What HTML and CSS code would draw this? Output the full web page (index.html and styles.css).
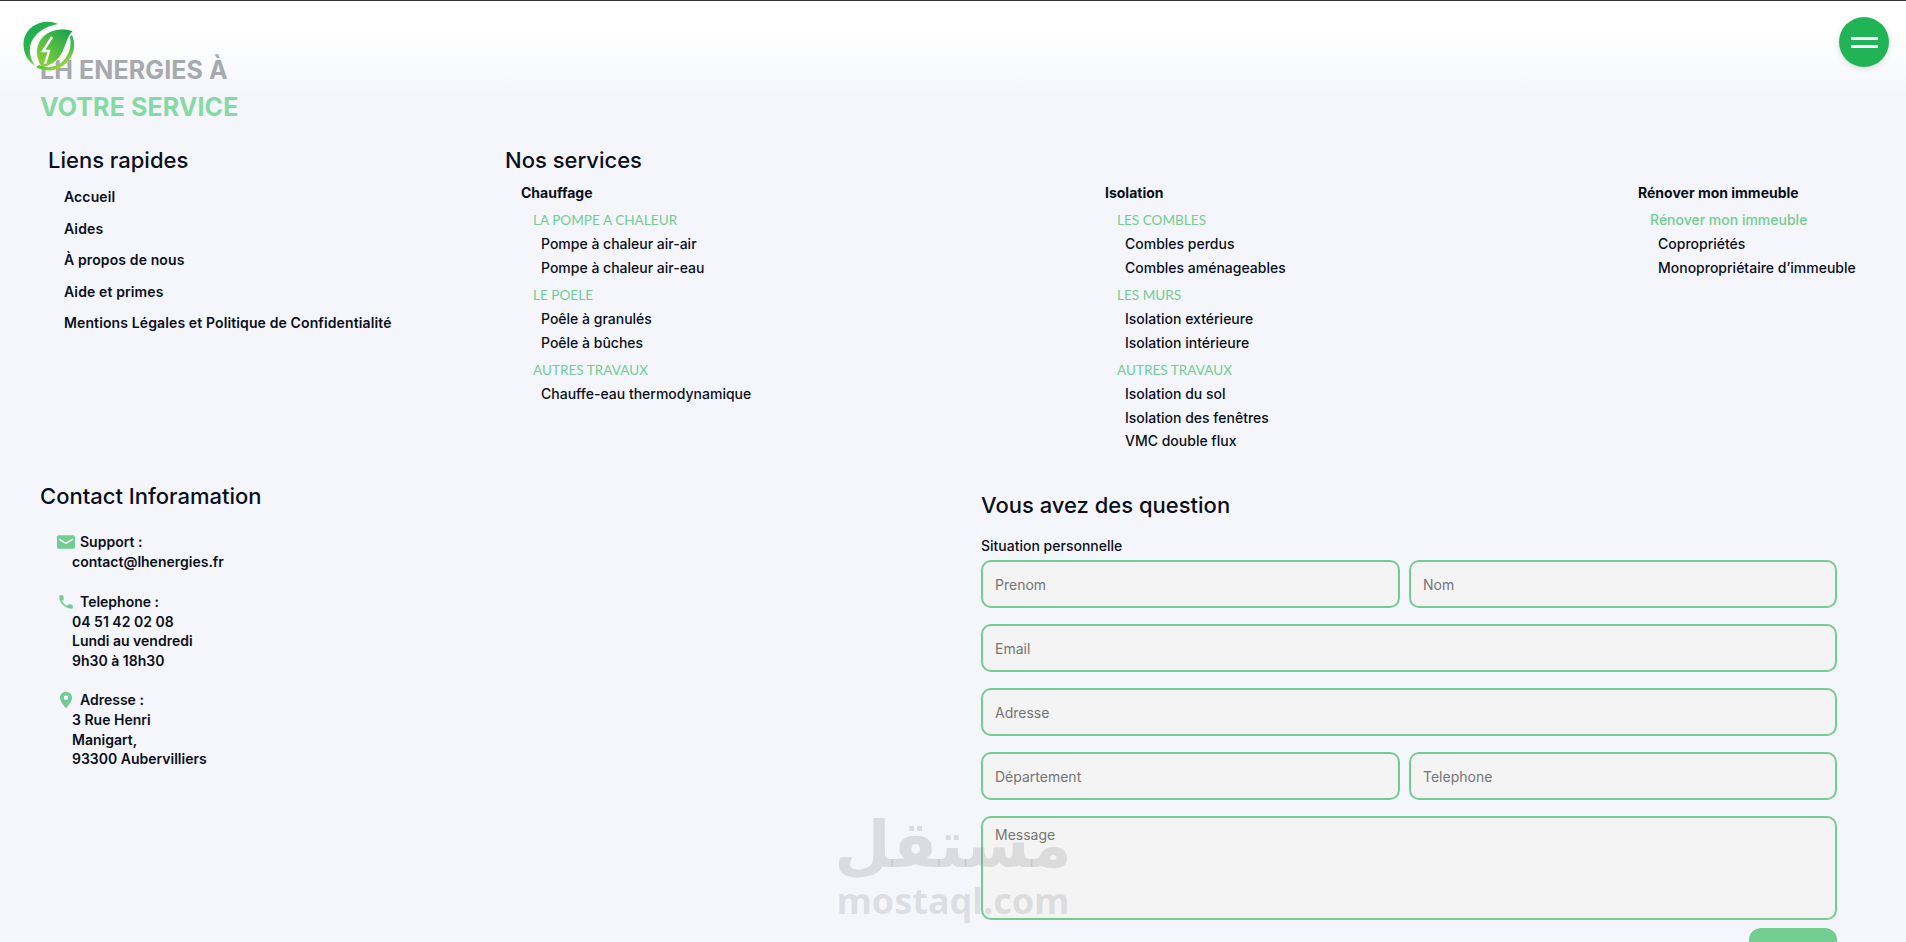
FILE: index.html
```html
<!DOCTYPE html>
<html lang="fr">
  <head>
    <meta charset="UTF-8" />
    <meta name="viewport" content="width=device-width, initial-scale=1.0" />
    <title>LH Energies</title>
    <link rel="stylesheet" href="styles.css">
  </head>
  <body>
    <header class="page-header">
      <svg class="logo" width="54" height="54" viewBox="0 0 54 54">
        <defs>
          <linearGradient id="logoRing" x1="0" y1="0" x2="0.6" y2="1">
            <stop offset="0" stop-color="#12a650" />
            <stop offset="0.55" stop-color="#2db84a" />
            <stop offset="1" stop-color="#a4dc2c" />
          </linearGradient>
          <linearGradient id="logoLeaf" x1="0.9" y1="0" x2="0.1" y2="1">
            <stop offset="0" stop-color="#13a24f" />
            <stop offset="1" stop-color="#93d534" />
          </linearGradient>
        </defs>
        <path d="M36 4 C22 -2 6 5 2 19 C0 30 4 40 13 46 C7 37 6 27 11 19 C16 11 25 6 36 4 Z" fill="url(#logoRing)" />
        <path d="M51 11 C38 6 24 11 18 20 C13 28 13 38 20 48 C27 46 35 42 39 35 C44 27 45 17 51 11 Z" fill="url(#logoLeaf)" stroke="#fff" stroke-width="0.8" />
        <path d="M50 15 C55 27 51 38 42 45 C33 52 22 52 14 47 L17 45 C25 49 34 47 40 42 C47 36 50 26 48 17 Z" fill="url(#logoRing)" />
        <path d="M30 17 L21 31 L27 31 L23 44" fill="none" stroke="#fff" stroke-width="2.4" />
      </svg>
      <h1 class="hero-title">
        <span class="hero-dark">LH ENERGIES À</span>
        <span class="hero-green">VOTRE SERVICE</span>
      </h1>
      <button class="menu-btn" aria-label="Menu"><span></span><span></span></button>
    </header>

    <section class="links-row">
      <div class="quick-links">
        <h2 class="section-title">Liens rapides</h2>
        <ul class="quick-list">
          <li>Accueil</li>
          <li>Aides</li>
          <li>À propos de nous</li>
          <li>Aide et primes</li>
          <li>Mentions Légales et Politique de Confidentialité</li>
        </ul>
      </div>
      <div class="services">
        <h2 class="section-title">Nos services</h2>
        <div class="service-cols">
          <div class="service-col">
            <h3 class="col-title">Chauffage</h3>
            <h4 class="group-title">LA POMPE A CHALEUR</h4>
            <ul class="group-list">
              <li>Pompe à chaleur air-air</li>
              <li>Pompe à chaleur air-eau</li>
            </ul>
            <h4 class="group-title">LE POELE</h4>
            <ul class="group-list">
              <li>Poêle à granulés</li>
              <li>Poêle à bûches</li>
            </ul>
            <h4 class="group-title">AUTRES TRAVAUX</h4>
            <ul class="group-list">
              <li>Chauffe-eau thermodynamique</li>
            </ul>
          </div>
          <div class="service-col">
            <h3 class="col-title">Isolation</h3>
            <h4 class="group-title">LES COMBLES</h4>
            <ul class="group-list">
              <li>Combles perdus</li>
              <li>Combles aménageables</li>
            </ul>
            <h4 class="group-title">LES MURS</h4>
            <ul class="group-list">
              <li>Isolation extérieure</li>
              <li>Isolation intérieure</li>
            </ul>
            <h4 class="group-title">AUTRES TRAVAUX</h4>
            <ul class="group-list">
              <li>Isolation du sol</li>
              <li>Isolation des fenêtres</li>
              <li>VMC double flux</li>
            </ul>
          </div>
          <div class="service-col">
            <h3 class="col-title">Rénover mon immeuble</h3>
            <h4 class="group-title group-title-plain">Rénover mon immeuble</h4>
            <ul class="group-list">
              <li>Copropriétés</li>
              <li>Monopropriétaire d’immeuble</li>
            </ul>
          </div>
        </div>
      </div>
    </section>

    <section class="contact-row">
      <div class="contact-info">
        <h2 class="section-title">Contact Inforamation</h2>
        <div class="contact-block">
          <p class="contact-head">
            <svg class="contact-icon" width="18" height="18" viewBox="0 0 24 24"><path d="M2.5 3h19A2.5 2.5 0 0 1 24 5.5v13a2.5 2.5 0 0 1-2.5 2.5h-19A2.5 2.5 0 0 1 0 18.500v-13A2.500 2.500 0 0 1 2.500 3zm9.500 9.500L3 7v2.500l9 5.500 9-5.500V7z" /></svg>
            Support :
          </p>
          <p class="contact-line">contact@lhenergies.fr</p>
        </div>
        <div class="contact-block">
          <p class="contact-head">
            <svg class="contact-icon" width="18" height="18" viewBox="0 0 24 24"><path d="M6.600 10.800c1.400 2.800 3.800 5.100 6.600 6.600l2.200-2.200c.3-.3.700-.4 1-.2 1.100.4 2.300.6 3.600.6.600 0 1 .4 1 1V20c0 .6-.4 1-1 1C10.600 21 3 13.400 3 4c0-.6.400-1 1-1h3.500c.6 0 1 .4 1 1 0 1.300.2 2.500.6 3.600.1.300 0 .7-.2 1z" /></svg>
            Telephone :
          </p>
          <p class="contact-line">04 51 42 02 08</p>
          <p class="contact-line">Lundi au vendredi</p>
          <p class="contact-line">9h30 à 18h30</p>
        </div>
        <div class="contact-block">
          <p class="contact-head">
            <svg class="contact-icon" width="18" height="18" viewBox="0 0 24 24"><path d="M12 1C7.100 1 4 4.700 4 9c0 5.500 8 14 8 14s8-8.500 8-14c0-4.300-3.100-8-8-8zm0 11a3 3 0 1 1 0-6 3 3 0 0 1 0 6z" /></svg>
            Adresse :
          </p>
          <p class="contact-line">3 Rue Henri</p>
          <p class="contact-line">Manigart,</p>
          <p class="contact-line">93300 Aubervilliers</p>
        </div>
      </div>

      <form class="contact-form">
        <h2 class="section-title">Vous avez des question</h2>
        <label class="form-label">Situation personnelle</label>
        <div class="form-row">
          <input class="field" type="text" placeholder="Prenom" />
          <input class="field" type="text" placeholder="Nom" />
        </div>
        <input class="field" type="text" placeholder="Email" />
        <input class="field" type="text" placeholder="Adresse" />
        <div class="form-row">
          <input class="field" type="text" placeholder="Département" />
          <input class="field" type="text" placeholder="Telephone" />
        </div>
        <textarea class="field field-area" placeholder="Message"></textarea>
        <button class="send-btn" type="button"></button>
      </form>
    </section>

    <div class="watermark">
      <span class="watermark-ar" dir="rtl">مستقل</span>
      <span class="watermark-en">mostaql.com</span>
    </div>
  </body>
</html>
```

FILE: styles.css
```css
html,
body {
  height: 100%;
}
body {
  position: relative;
  box-sizing: border-box;
  height: 942px;
  overflow: hidden;
  margin: 0;
  border-top: 1px solid #333;
  background: linear-gradient(#fff 0, #fff 30px, #f4f6fc 100px);
  font-family: Inter, "Liberation Sans", sans-serif;
  color: #0b0f19;
}
ul {
  list-style: none;
  margin: 0;
  padding: 0;
}
p,
h1,
h2,
h3,
h4 {
  margin: 0;
}

.page-header {
  display: flex;
  justify-content: space-between;
  align-items: flex-start;
  height: 146px;
  padding: 0 17px 0 40px;
}
.logo {
  position: absolute;
  left: 22px;
  top: 19px;
}
.hero-title {
  display: flex;
  flex-direction: column;
  gap: 9px;
  margin-top: 55px;
  font-size: 25px;
  line-height: 28px;
  font-weight: 700;
  letter-spacing: 0.1px;
}
.hero-dark {
  color: #a6a9ae;
}
.hero-green {
  color: #85d9a3;
}
.menu-btn {
  display: flex;
  flex-direction: column;
  justify-content: center;
  gap: 5px;
  align-items: center;
  width: 50px;
  height: 50px;
  margin-top: 16px;
  padding: 0;
  border: none;
  border-radius: 50%;
  background-color: #21b457;
  box-shadow: 0 2px 6px rgba(0, 0, 0, 0.12);
}
.menu-btn span {
  display: block;
  width: 27px;
  height: 3px;
  background-color: #fff;
}

.section-title {
  font-size: 22px;
  line-height: 26px;
  font-weight: 500;
}

.links-row {
  display: flex;
  height: 317px;
  padding-left: 48px;
}
.quick-links {
  width: 457px;
}
.quick-list {
  padding: 8px 0 0 16px;
}
.quick-list li {
  height: 31.5px;
  line-height: 31.5px;
  font-size: 14px;
  font-weight: 600;
  letter-spacing: 0.12px;
}
.services {
  flex-grow: 1;
}
.service-cols {
  display: grid;
  grid-template-columns: 584px 533px auto;
  padding: 10px 0 0 16px;
}
.col-title {
  margin-bottom: 7px;
  line-height: 20px;
  font-size: 14px;
  font-weight: 700;
}
.group-title {
  margin: 0 0 0 12px;
  line-height: 20px;
  font-family: Lato, "Liberation Sans", sans-serif;
  font-size: 13.6px;
  font-weight: 400;
  color: #72cd91;
}
.group-title-plain {
  font-family: Inter, "Liberation Sans", sans-serif;
  font-size: 14px;
  font-weight: 500;
}
.group-list {
  margin: 2px 0 6px 20px;
}
.group-list li {
  height: 23.5px;
  line-height: 23.5px;
  font-size: 14px;
  font-weight: 500;
}

.contact-row {
  display: flex;
  padding-left: 40px;
}
.contact-info {
  width: 941px;
  padding-top: 19px;
}
.contact-block {
  margin: 0 0 20px 17px;
  font-size: 14px;
  font-weight: 600;
}
.contact-info .section-title {
  margin-bottom: 23px;
}
.contact-head {
  display: flex;
  align-items: center;
  gap: 5px;
  height: 20px;
  line-height: 20px;
}
.contact-icon {
  fill: #72cd91;
}
.contact-line {
  margin-left: 15px;
  height: 19.5px;
  line-height: 19.5px;
}

.contact-form {
  display: flex;
  flex-direction: column;
  gap: 16px;
  width: 856px;
  padding-top: 28px;
}
.form-label {
  margin: 2px 0 -12px;
  line-height: 20px;
  font-size: 14px;
  font-weight: 500;
}
.form-row {
  display: grid;
  grid-template-columns: 419px 428px;
  gap: 9px;
}
.field {
  box-sizing: border-box;
  width: 100%;
  height: 48px;
  padding: 0 12px;
  border: 2px solid #72cd91;
  border-radius: 10px;
  background-color: #f4f4f4;
  font-family: inherit;
  font-size: 14px;
  color: #333;
}
.field::placeholder {
  color: #757575;
}
.field-area {
  display: block;
  height: 104px;
  padding-top: 8px;
  resize: none;
}
.send-btn {
  align-self: flex-end;
  width: 88px;
  height: 48px;
  margin-top: -8px;
  border: none;
  border-radius: 12px;
  background-color: #72cd91;
}

.watermark {
  position: absolute;
  left: 838px;
  top: 806px;
  width: 230px;
  display: flex;
  flex-direction: column;
  align-items: center;
  color: rgba(120, 120, 120, 0.2);
  pointer-events: none;
  font-family: "DejaVu Sans", sans-serif;
  font-weight: 700;
}
.watermark-ar {
  font-size: 65px;
  line-height: 76px;
}
.watermark-en {
  font-family: "Noto Sans", sans-serif;
  font-size: 36px;
  line-height: 36px;
}
```
